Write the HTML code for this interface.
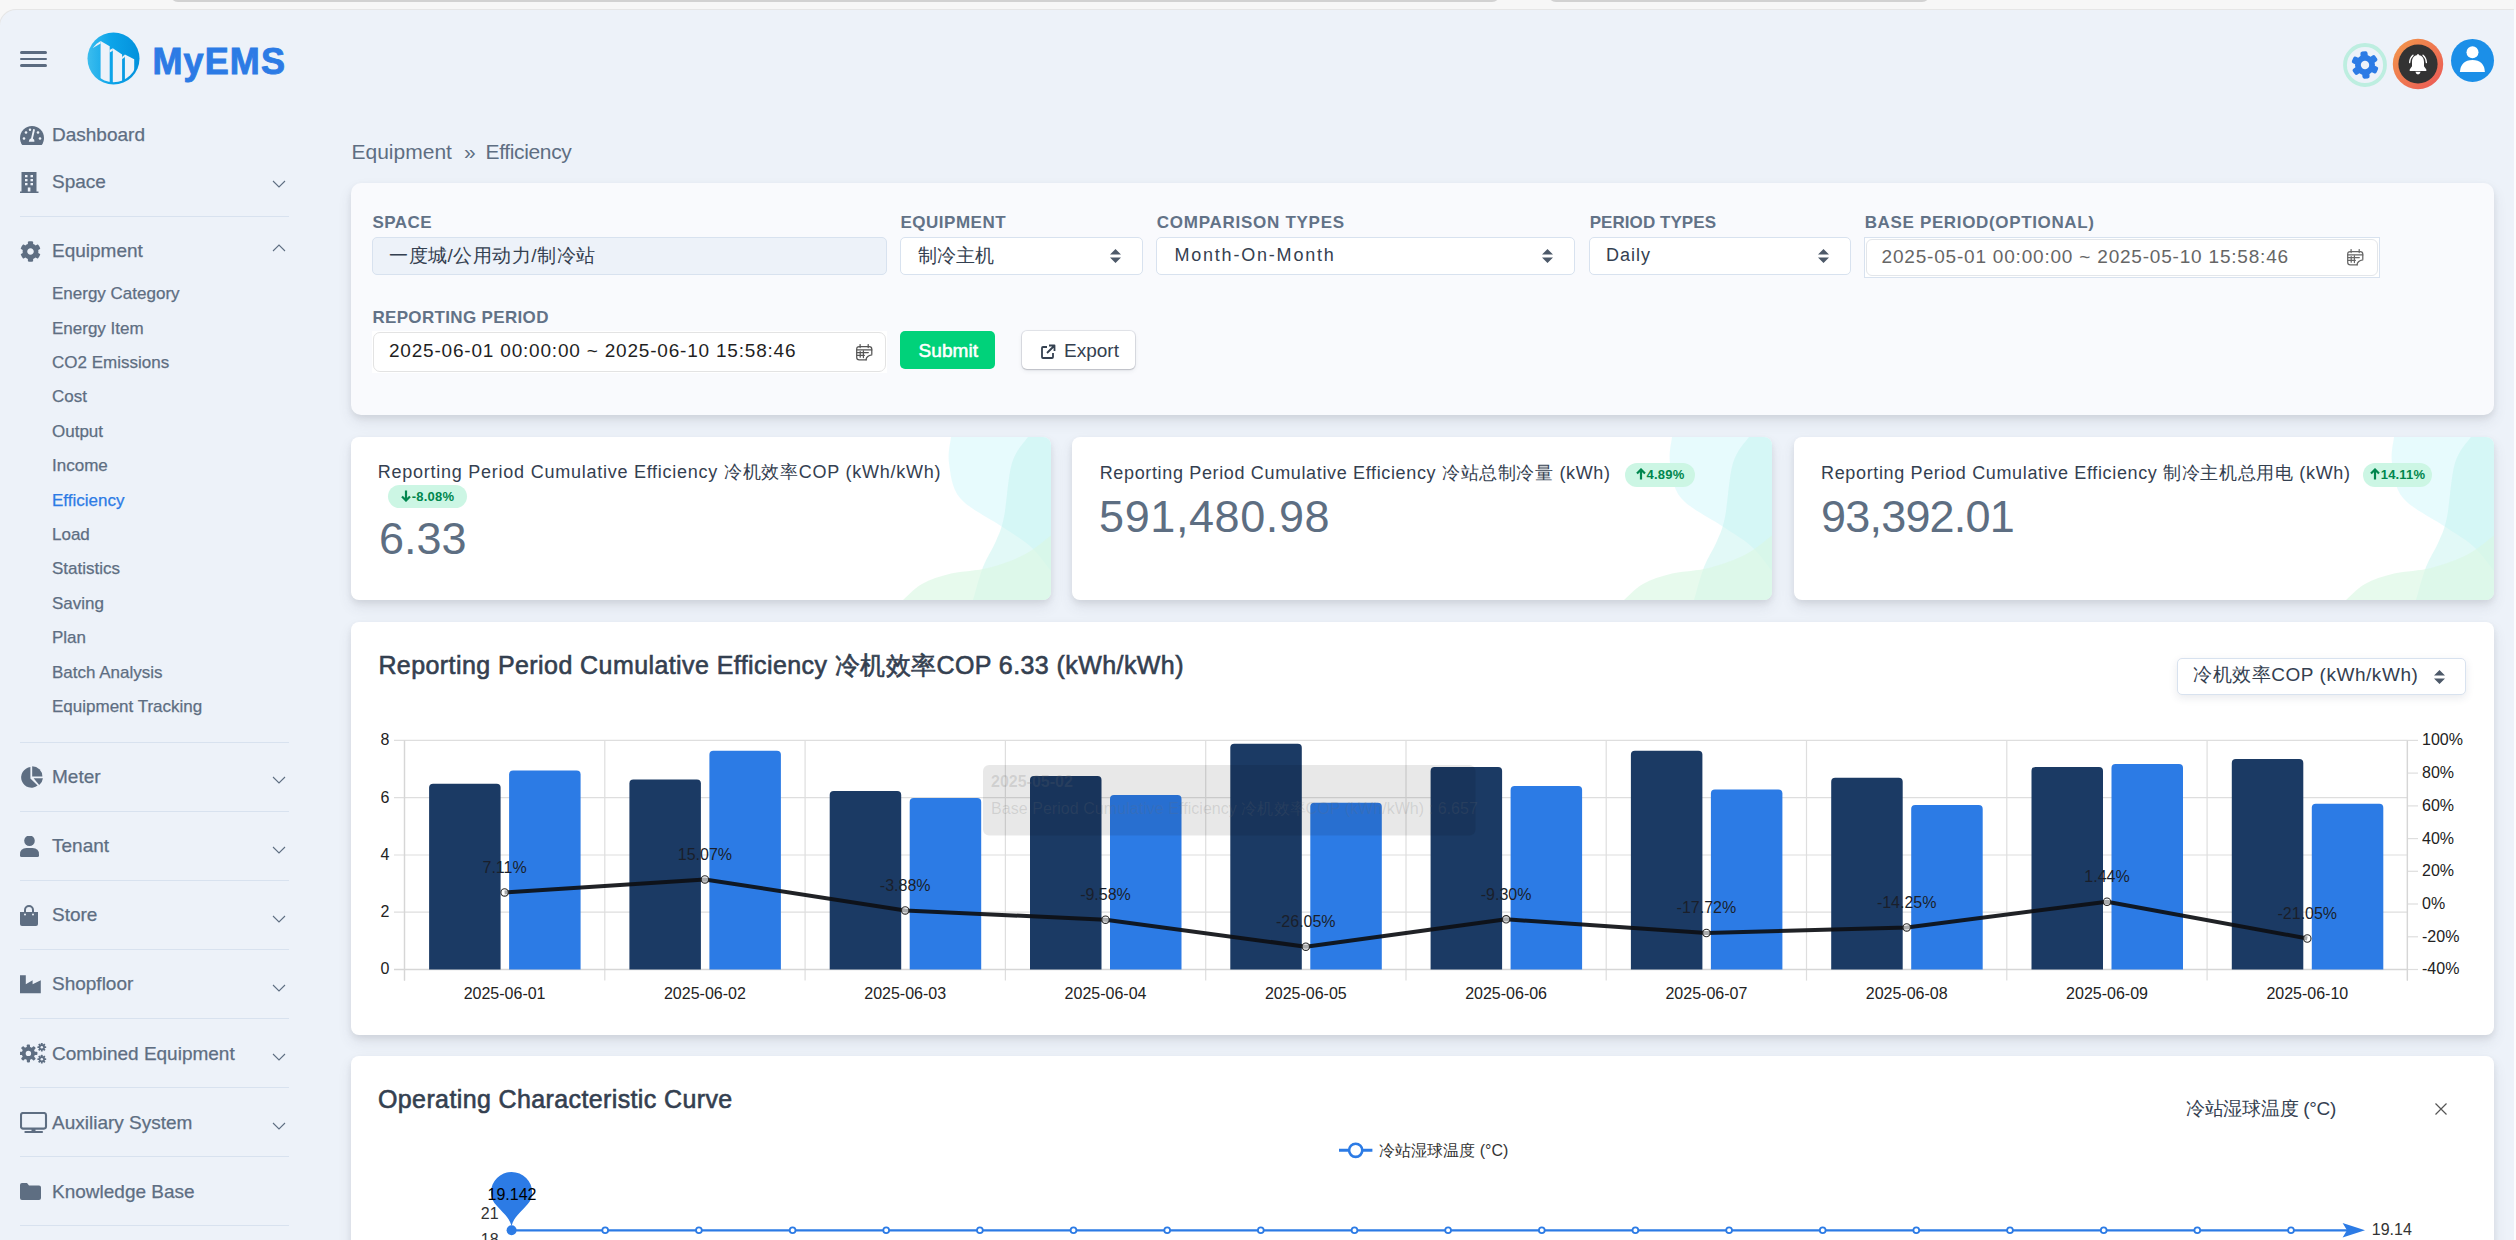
<!DOCTYPE html>
<html><head><meta charset="utf-8">
<style>
*{box-sizing:border-box;margin:0;padding:0}
html,body{width:2516px;height:1240px;overflow:hidden;background:#f7f7f7;font-family:"Liberation Sans",sans-serif}
.abs{position:absolute}
.t{position:absolute;white-space:nowrap}
#topbar{position:absolute;left:0;top:0;width:2516px;height:10px;background:#f7f7f7}
.tab{position:absolute;top:-6px;height:8px;background:#d2d2d2;border-radius:0 0 14px 14px}
#page{position:absolute;left:-1px;top:9px;width:2515px;height:1240px;background:#edf2f9;border-top:1px solid #e6e6e6;border-left:1px solid #e6e6e6;border-top-left-radius:17px}
#rstrip{position:absolute;left:2514px;top:10px;width:2px;height:1230px;background:#fbfcfd}
.nav{position:absolute;left:52px;color:#5e6e82;font-size:19px;line-height:24px;white-space:nowrap;-webkit-text-stroke:.25px #5e6e82}
.sub{position:absolute;left:52px;color:#5e6e82;font-size:17px;line-height:22px;white-space:nowrap;-webkit-text-stroke:.25px currentColor}
.div{position:absolute;left:20px;width:269px;height:1px;background:#d8e2ef}
.ico{position:absolute;left:20px}
.chev{position:absolute;left:272px;width:14px;height:8px}
.card{position:absolute;background:#fff;border-radius:8px;box-shadow:0 7px 14px 0 rgba(65,69,88,.1),0 3px 6px 0 rgba(0,0,0,.07)}
</style></head><body>
<div id="topbar">
  <div class="tab" style="left:170px;width:1330px"></div>
  <div class="tab" style="left:1548px;width:382px"></div>
</div>
<div id="page"></div>
<div id="rstrip"></div>
<div id="sidebar">
<!-- hamburger -->
<div class="abs" style="left:20px;top:51px;width:27px;height:3px;border-radius:2px;background:#5b6b80"></div>
<div class="abs" style="left:20px;top:58px;width:27px;height:2px;border-radius:1px;background:#5b6b80"></div>
<div class="abs" style="left:20px;top:64px;width:27px;height:3px;border-radius:2px;background:#5b6b80"></div>
<!-- logo -->
<svg class="abs" style="left:87px;top:32px" width="53" height="54" viewBox="0 0 53 54">
 <defs><linearGradient id="lg" x1="0" y1="0" x2="1" y2="0"><stop offset="0" stop-color="#3cbdee"/><stop offset=".45" stop-color="#0ca4e9"/><stop offset="1" stop-color="#0391dc"/></linearGradient>
 <clipPath id="lc"><circle cx="26.5" cy="26.6" r="23.6"/></clipPath></defs>
 <circle cx="26.5" cy="26.6" r="26" fill="url(#lg)"/>
 <g fill="#edf2f9" clip-path="url(#lc)">
  <path d="M5.5 16.2 Q9 11.6 13.6 9.1 L13.6 11.6 L6.3 15.8Z"/>
  <path d="M13.6 9.1 L22.7 14.2 L22.7 56 L13.6 56Z"/>
  <path d="M22.7 17.9 L25.8 16.2 L25.8 18.8 L22.7 20.4Z"/>
  <path d="M25.8 16.2 L35.1 22.4 L35.1 56 L25.8 56Z"/>
  <path d="M35.1 25.1 L37.9 22.4 L37.9 25 L35.1 27.2Z"/>
  <path d="M37.9 22.4 L47.2 27.2 L47.2 56 L37.9 56Z"/>
 </g>
</svg>
<div class="abs" style="left:152.5px;top:43.5px;font-size:36px;font-weight:bold;color:#2c7be5;letter-spacing:1.1px;line-height:36px;-webkit-text-stroke:.9px #2c7be5">MyEMS</div>

<!-- Dashboard -->
<svg class="ico" style="top:126px" width="24" height="19" viewBox="0 0 24 19">
 <path d="M12 0C5.4 0 0 5.4 0 12c0 2.5.8 4.8 2 6.7.3.2.6.3.9.3h18.2c.3 0 .6-.1.9-.3 1.2-1.9 2-4.2 2-6.7C24 5.4 18.6 0 12 0z" fill="#5e6e82"/>
 <circle cx="10" cy="3.8" r="1.2" fill="#edf2f9"/><circle cx="6" cy="6.5" r="1.3" fill="#edf2f9"/><circle cx="18" cy="6.5" r="1.3" fill="#edf2f9"/>
 <circle cx="4" cy="12.5" r="1.3" fill="#edf2f9"/><circle cx="20" cy="12.5" r="1.3" fill="#edf2f9"/>
 <path d="M13.2 3 L15 3.5 L12.9 12.6 Q14.8 13.6 14.4 15.8 L8.8 15.8 Q8.9 13.1 11.1 12.3 Z" fill="#edf2f9"/>
</svg>
<div class="nav" style="top:123px">Dashboard</div>

<!-- Space -->
<svg class="ico" style="top:172px" width="19" height="21" viewBox="0 0 19 21">
 <path d="M1.5 0h15v19.5h2v1.5H0v-1.5h1.5z" fill="#5e6e82"/>
 <g fill="#edf2f9"><rect x="5" y="3" width="2.5" height="2.3"/><rect x="10.5" y="3" width="2.5" height="2.3"/><rect x="5" y="7" width="2.5" height="2.3"/><rect x="10.5" y="7" width="2.5" height="2.3"/><rect x="5" y="11" width="2.5" height="2.3"/><rect x="10.5" y="11" width="2.5" height="2.3"/><rect x="7.8" y="15.5" width="2.6" height="4"/></g>
</svg>
<div class="nav" style="top:170px">Space</div>
<svg class="chev" style="top:180px" viewBox="0 0 14 8"><path d="M1 1 L7 7 L13 1" fill="none" stroke="#5e6e82" stroke-width="1.1"/></svg>
<div class="div" style="top:216px"></div>

<!-- Equipment -->
<svg class="ico" style="top:241px" width="21" height="21" viewBox="0 0 512 512"><path fill="#5e6e82" d="M487.4 315.7l-42.6-24.6c4.3-23.2 4.3-47 0-70.2l42.6-24.6c4.9-2.8 7.1-8.6 5.5-14-11.1-35.6-30-67.8-54.7-94.6-3.8-4.1-10-5.1-14.8-2.3L380.8 110c-17.9-15.4-38.5-27.3-60.8-35.1V25.8c0-5.6-3.9-10.5-9.4-11.7-36.7-8.2-74.3-7.8-109.2 0-5.5 1.2-9.4 6.1-9.4 11.7V75c-22.2 7.9-42.8 19.8-60.8 35.1L88.7 85.5c-4.9-2.8-11-1.9-14.8 2.3-24.7 26.7-43.6 58.9-54.7 94.6-1.7 5.4.6 11.2 5.5 14L67.3 221c-4.3 23.2-4.3 47 0 70.2l-42.6 24.6c-4.9 2.8-7.1 8.6-5.5 14 11.1 35.6 30 67.8 54.7 94.6 3.8 4.1 10 5.1 14.8 2.3l42.6-24.6c17.9 15.4 38.5 27.3 60.8 35.1v49.2c0 5.6 3.9 10.5 9.4 11.7 36.7 8.2 74.3 7.8 109.2 0 5.5-1.2 9.4-6.1 9.4-11.7v-49.2c22.2-7.9 42.8-19.8 60.8-35.1l42.6 24.6c4.9 2.8 11 1.9 14.8-2.3 24.7-26.7 43.6-58.9 54.7-94.6 1.5-5.5-.7-11.3-5.6-14.1zM256 336c-44.1 0-80-35.9-80-80s35.9-80 80-80 80 35.9 80 80-35.9 80-80 80z"/></svg>
<div class="nav" style="top:239px">Equipment</div>
<svg class="chev" style="top:244px" viewBox="0 0 14 8"><path d="M1 7 L7 1 L13 7" fill="none" stroke="#5e6e82" stroke-width="1.1"/></svg>
<div class="sub" style="top:283px">Energy Category</div>
<div class="sub" style="top:318px">Energy Item</div>
<div class="sub" style="top:352px">CO2 Emissions</div>
<div class="sub" style="top:386px">Cost</div>
<div class="sub" style="top:421px">Output</div>
<div class="sub" style="top:455px">Income</div>
<div class="sub" style="top:490px;color:#2c7be5">Efficiency</div>
<div class="sub" style="top:524px">Load</div>
<div class="sub" style="top:558px">Statistics</div>
<div class="sub" style="top:593px">Saving</div>
<div class="sub" style="top:627px">Plan</div>
<div class="sub" style="top:662px">Batch Analysis</div>
<div class="sub" style="top:696px">Equipment Tracking</div>
<div class="div" style="top:742px"></div>
<svg class="ico" style="top:766px" width="24" height="22" viewBox="0 0 24 22"><g fill="#5e6e82"><path d="M10.4 1.1A10.3 10.3 0 1 0 17.6 19.6L10.4 12.4Z"/><path d="M12.2 0.2A10.2 10.2 0 0 1 22.4 10.4H12.2Z"/><path d="M13.6 12.2H22.9Q22.6 16 19.2 18.9Z"/></g></svg>
<div class="nav" style="top:765px">Meter</div>
<svg class="chev" style="top:776px" viewBox="0 0 14 8"><path d="M1 1 L7 7 L13 1" fill="none" stroke="#5e6e82" stroke-width="1.1"/></svg>
<div class="div" style="top:811px"></div>
<svg class="ico" style="top:836px" width="19" height="21" viewBox="0 0 19 21"><circle cx="9.5" cy="4.8" r="5.3" fill="#5e6e82"/><path d="M0 18.5Q0 12 6.5 12h6Q19 12 19 18.5V19.5Q19 21 17.5 21h-16Q0 21 0 19.5z" fill="#5e6e82"/></svg>
<div class="nav" style="top:834px">Tenant</div>
<svg class="chev" style="top:846px" viewBox="0 0 14 8"><path d="M1 1 L7 7 L13 1" fill="none" stroke="#5e6e82" stroke-width="1.1"/></svg>
<div class="div" style="top:880px"></div>
<svg class="ico" style="top:905px" width="18" height="21" viewBox="0 0 18 21"><path d="M5 7V5a4 4 0 0 1 8 0v2" fill="none" stroke="#5e6e82" stroke-width="2"/><path d="M0 7h18v12q0 2-2 2H2q-2 0-2-2z" fill="#5e6e82"/><circle cx="5" cy="9.5" r="1" fill="#edf2f9"/><circle cx="13" cy="9.5" r="1" fill="#edf2f9"/></svg>
<div class="nav" style="top:903px">Store</div>
<svg class="chev" style="top:915px" viewBox="0 0 14 8"><path d="M1 1 L7 7 L13 1" fill="none" stroke="#5e6e82" stroke-width="1.1"/></svg>
<div class="div" style="top:949px"></div>
<svg class="ico" style="top:975px" width="21" height="19" viewBox="0 0 21 19"><path d="M0 0.3H5.8V9.3L12.6 5.3V9.3L20.8 5.3V18.3H0Z" fill="#5e6e82"/></svg>
<div class="nav" style="top:972px">Shopfloor</div>
<svg class="chev" style="top:984px" viewBox="0 0 14 8"><path d="M1 1 L7 7 L13 1" fill="none" stroke="#5e6e82" stroke-width="1.1"/></svg>
<div class="div" style="top:1018px"></div>
<svg class="ico" style="top:1043px" width="27" height="22" viewBox="0 0 27 22"><g fill="#5e6e82"><circle cx="8.4" cy="10.4" r="6.6"/><rect x="6.800000000000001" y="1.4000000000000004" width="3.2" height="18.0" rx="0.80" transform="rotate(0.0 8.4 10.4)"/><rect x="6.800000000000001" y="1.4000000000000004" width="3.2" height="18.0" rx="0.80" transform="rotate(45.0 8.4 10.4)"/><rect x="6.800000000000001" y="1.4000000000000004" width="3.2" height="18.0" rx="0.80" transform="rotate(90.0 8.4 10.4)"/><rect x="6.800000000000001" y="1.4000000000000004" width="3.2" height="18.0" rx="0.80" transform="rotate(135.0 8.4 10.4)"/><circle cx="21.8" cy="4.2" r="3.0"/><rect x="20.900000000000002" y="-0.20000000000000018" width="1.8" height="8.8" rx="0.45" transform="rotate(0.0 21.8 4.2)"/><rect x="20.900000000000002" y="-0.20000000000000018" width="1.8" height="8.8" rx="0.45" transform="rotate(45.0 21.8 4.2)"/><rect x="20.900000000000002" y="-0.20000000000000018" width="1.8" height="8.8" rx="0.45" transform="rotate(90.0 21.8 4.2)"/><rect x="20.900000000000002" y="-0.20000000000000018" width="1.8" height="8.8" rx="0.45" transform="rotate(135.0 21.8 4.2)"/><circle cx="21.8" cy="16.2" r="3.0"/><rect x="20.900000000000002" y="11.799999999999999" width="1.8" height="8.8" rx="0.45" transform="rotate(0.0 21.8 16.2)"/><rect x="20.900000000000002" y="11.799999999999999" width="1.8" height="8.8" rx="0.45" transform="rotate(45.0 21.8 16.2)"/><rect x="20.900000000000002" y="11.799999999999999" width="1.8" height="8.8" rx="0.45" transform="rotate(90.0 21.8 16.2)"/><rect x="20.900000000000002" y="11.799999999999999" width="1.8" height="8.8" rx="0.45" transform="rotate(135.0 21.8 16.2)"/></g><g fill="#edf2f9"><circle cx="8.4" cy="10.4" r="2.7"/><circle cx="21.8" cy="4.2" r="1.25"/><circle cx="21.8" cy="16.2" r="1.25"/></g></svg>
<div class="nav" style="top:1042px">Combined Equipment</div>
<svg class="chev" style="top:1053px" viewBox="0 0 14 8"><path d="M1 1 L7 7 L13 1" fill="none" stroke="#5e6e82" stroke-width="1.1"/></svg>
<div class="div" style="top:1087px"></div>
<svg class="ico" style="top:1112px" width="28" height="22" viewBox="0 0 28 22"><rect x="1" y="1" width="25" height="15.6" rx="2" fill="none" stroke="#5e6e82" stroke-width="2.1"/><rect x="11.5" y="16" width="4" height="3" fill="#5e6e82"/><rect x="4.3" y="18.9" width="18.8" height="2.2" rx="1.1" fill="#5e6e82"/></svg>
<div class="nav" style="top:1111px">Auxiliary System</div>
<svg class="chev" style="top:1122px" viewBox="0 0 14 8"><path d="M1 1 L7 7 L13 1" fill="none" stroke="#5e6e82" stroke-width="1.1"/></svg>
<div class="div" style="top:1156px"></div>
<svg class="ico" style="top:1183px" width="21" height="17" viewBox="0 0 21 17"><path d="M0 2Q0 0 2 0h5l2 2.5h10Q21 2.5 21 4.5V15q0 2-2 2H2q-2 0-2-2z" fill="#5e6e82"/></svg>
<div class="nav" style="top:1180px">Knowledge Base</div>
<div class="div" style="top:1225px"></div>
</div>
<div id="main">
<svg class="abs" style="left:2336px;top:36px" width="160" height="60" viewBox="2336 36 160 60">
 <circle cx="2365" cy="65" r="20" fill="none" stroke="#bdeee0" stroke-width="3.8"/>
 <g transform="translate(2365 65) rotate(-5)">
  <g fill="#2c7be5">
   <circle r="10"/>
   <rect x="-3.6" y="-13.6" width="7.2" height="27.2" rx="2"/>
   <rect x="-3.6" y="-13.6" width="7.2" height="27.2" rx="2" transform="rotate(60)"/>
   <rect x="-3.6" y="-13.6" width="7.2" height="27.2" rx="2" transform="rotate(120)"/>
  </g>
  <circle r="4.2" fill="#edf2f9"/>
 </g>
 <defs><linearGradient id="og" x1="0" y1="0" x2="1" y2="1"><stop offset="0" stop-color="#f2994a"/><stop offset="1" stop-color="#eb5757"/></linearGradient></defs>
 <circle cx="2418" cy="64" r="25.2" fill="url(#og)"/>
 <circle cx="2418" cy="64" r="19.6" fill="#333"/>
 <path d="M2418 54.2c-.8 0-1.2.5-1.2 1.1-3.3.6-4.8 3.4-4.8 6.7v4.3l-2.3 3.2v1.6h16.6v-1.6l-2.3-3.2V62c0-3.3-1.5-6.1-4.8-6.7 0-.6-.4-1.1-1.2-1.1z" fill="#fff"/>
 <path d="M2415.4 71.8h5.2q-.6 2.6-2.6 2.6t-2.6-2.6z" fill="#fff"/>
 <path d="M2409.6 62.6q.2-4.6 3.4-7.4M2426.4 62.6q-.2-4.6-3.4-7.4" fill="none" stroke="#fff" stroke-width="1.3" stroke-linecap="round"/>
 <circle cx="2472.5" cy="60.4" r="21.5" fill="#1b8fe8"/>
 <circle cx="2472.5" cy="52.2" r="6" fill="#fff"/>
 <path d="M2459.9 72q1-11.9 12.6-11.9t12.4 11.9z" fill="#fff"/>
</svg>
<div class="t" style="left:351.5px;top:141.3px;font-size:21px;line-height:21px;color:#5e6e82;font-weight:400;letter-spacing:0px;">Equipment</div>
<div class="t" style="left:464px;top:141.3px;font-size:21px;line-height:21px;color:#5e6e82;font-weight:400;letter-spacing:0px;">»</div>
<div class="t" style="left:485.5px;top:141.3px;font-size:21px;line-height:21px;color:#5e6e82;font-weight:400;letter-spacing:-0.35px;">Efficiency</div>
<div class="card" style="left:351px;top:183px;width:2143px;height:232px;background:#f9fafd;border-radius:10px"></div>
<div class="t" style="left:372.5px;top:214.4px;font-size:17px;line-height:17px;color:#627287;font-weight:700;letter-spacing:0.45px;">SPACE</div>
<div class="t" style="left:900.5px;top:214.4px;font-size:17px;line-height:17px;color:#627287;font-weight:700;letter-spacing:0.5px;">EQUIPMENT</div>
<div class="t" style="left:1156.8px;top:214.4px;font-size:17px;line-height:17px;color:#627287;font-weight:700;letter-spacing:0.73px;">COMPARISON TYPES</div>
<div class="t" style="left:1589.7px;top:214.4px;font-size:17px;line-height:17px;color:#627287;font-weight:700;letter-spacing:0.06px;">PERIOD TYPES</div>
<div class="t" style="left:1864.7px;top:214.4px;font-size:17px;line-height:17px;color:#627287;font-weight:700;letter-spacing:0.65px;">BASE PERIOD(OPTIONAL)</div>
<div class="t" style="left:372.4px;top:308.8px;font-size:17px;line-height:17px;color:#627287;font-weight:700;letter-spacing:0.34px;">REPORTING PERIOD</div>
<div class="abs" style="left:372px;top:237px;width:515px;height:38px;background:#edf2f9;border:1px solid #d8e2ef;border-radius:5px;"></div>
<div class="t" style="left:389px;top:245.9px;font-size:19px;line-height:19px;color:#344050;font-weight:400;letter-spacing:0.5px;">一度城/公用动力/制冷站</div>
<div class="abs" style="left:900px;top:237px;width:243px;height:38px;background:#fff;border:1px solid #d8e2ef;border-radius:5px;"></div>
<div class="t" style="left:918px;top:245.9px;font-size:19px;line-height:19px;color:#344050;font-weight:400;letter-spacing:0px;">制冷主机</div>
<svg class="abs" style="left:1110px;top:249px" width="11" height="14" viewBox="0 0 11 14"><path d="M5.5 0L11 5.5H0z M0 8.5H11L5.5 14z" fill="#4d5969"/></svg>
<div class="abs" style="left:1156px;top:237px;width:419px;height:38px;background:#fff;border:1px solid #d8e2ef;border-radius:5px;"></div>
<div class="t" style="left:1174.4px;top:245.7px;font-size:18px;line-height:18px;color:#344050;font-weight:400;letter-spacing:1.8px;">Month-On-Month</div>
<svg class="abs" style="left:1542px;top:249px" width="11" height="14" viewBox="0 0 11 14"><path d="M5.5 0L11 5.5H0z M0 8.5H11L5.5 14z" fill="#4d5969"/></svg>
<div class="abs" style="left:1589px;top:237px;width:262px;height:38px;background:#fff;border:1px solid #d8e2ef;border-radius:5px;"></div>
<div class="t" style="left:1606px;top:245.7px;font-size:18px;line-height:18px;color:#344050;font-weight:400;letter-spacing:1.0px;">Daily</div>
<svg class="abs" style="left:1818px;top:249px" width="11" height="14" viewBox="0 0 11 14"><path d="M5.5 0L11 5.5H0z M0 8.5H11L5.5 14z" fill="#4d5969"/></svg>
<div class="abs" style="left:1864px;top:237px;width:516px;height:41px;background:#fff;border:1px solid #d8e2ef;border-radius:0px;"></div>
<div class="abs" style="left:1866px;top:239px;width:512px;height:37px;background:#fff;border:1px solid #e3e6ea;border-radius:6px;"></div>
<div class="t" style="left:1881.6px;top:246.9px;font-size:19px;line-height:19px;color:#666;font-weight:400;letter-spacing:0.8px;">2025-05-01 00:00:00 ~ 2025-05-10 15:58:46</div>
<svg class="abs" style="left:2347px;top:248.5px" width="17" height="17" viewBox="0 0 17 17"><g fill="none" stroke="#666" stroke-width="1.25" stroke-linecap="round"><path d="M15.8 10V5.2q0-2.6-2.6-2.6H3.3Q0.7 2.6 0.7 5.2V13.2q0 2.6 2.6 2.6H10.5"/><path d="M4.1 0.6v3M12.2 0.6v3M0.8 5.9H15.7M1.2 8.6H12.3M7.4 7.2V13.6M4.2 7.6V13.2M1.2 11.4H8.3"/><path d="M10 15.7Q10.6 11.5 15.8 10.8"/></g></svg>
<div class="abs" style="left:371.5px;top:331px;width:515.5px;height:41.5px;background:#fff;border:1px solid #fff;border-radius:0px;"></div>
<div class="abs" style="left:373px;top:332px;width:512.5px;height:39.5px;background:#fff;border:1px solid #e3e3e3;border-radius:7px;"></div>
<div class="t" style="left:389px;top:340.8px;font-size:19px;line-height:19px;color:#1f1f1f;font-weight:400;letter-spacing:0.8px;">2025-06-01 00:00:00 ~ 2025-06-10 15:58:46</div>
<svg class="abs" style="left:855.5px;top:343.5px" width="17" height="17" viewBox="0 0 17 17"><g fill="none" stroke="#555" stroke-width="1.25" stroke-linecap="round"><path d="M15.8 10V5.2q0-2.6-2.6-2.6H3.3Q0.7 2.6 0.7 5.2V13.2q0 2.6 2.6 2.6H10.5"/><path d="M4.1 0.6v3M12.2 0.6v3M0.8 5.9H15.7M1.2 8.6H12.3M7.4 7.2V13.6M4.2 7.6V13.2M1.2 11.4H8.3"/><path d="M10 15.7Q10.6 11.5 15.8 10.8"/></g></svg>
<div class="abs" style="left:900px;top:331px;width:95px;height:38px;background:#00d27a;border-radius:5px"></div>
<div class="t" style="left:918.5px;top:340.8px;font-size:19px;line-height:19px;color:#fff;font-weight:400;letter-spacing:0.1px;-webkit-text-stroke:.55px #fff;">Submit</div>
<div class="abs" style="left:1021.5px;top:330.5px;width:113.5px;height:38.5px;background:#fff;border-radius:5px;box-shadow:0 0 0 1px rgba(43,45,80,.1),0 2px 5px 0 rgba(43,45,80,.08),0 1px 1.5px 0 rgba(0,0,0,.07),0 1px 2px 0 rgba(0,0,0,.08)"></div>
<svg class="abs" style="left:1040px;top:344px" width="16" height="16" viewBox="0 0 16 16"><g fill="none" stroke="#344050" stroke-width="1.8" stroke-linejoin="round"><path d="M7 3H3Q2 3 2 4v9q0 1 1 1h9q1 0 1-1V9"/><path d="M9 1.5h5.5V7M14.5 1.5L7 9"/></g></svg>
<div class="t" style="left:1064px;top:340.9px;font-size:19px;line-height:19px;color:#344050;font-weight:400;letter-spacing:0px;">Export</div>
<div class="card" style="left:351px;top:437px;width:700px;height:163px;overflow:hidden"><svg style="position:absolute;left:0;top:0" width="700" height="163" viewBox="0 0 700 163"><path d="M600 0 C599.7 4.3 596.5 15.8 598 26 C599.5 36.2 600.3 50.5 609 61 C617.7 71.5 638.3 81.0 650 89 C661.7 97.0 670.7 101.5 679 109 C687.3 116.5 696.5 129.8 700 134 L700 0Z" fill="#dff9fc" fill-opacity=".75"/><path d="M677 0 C674.3 4.3 665.0 12.7 661 26 C657.0 39.3 655.7 67.0 653 80 C650.3 93.0 648.5 95.7 645 104 C641.5 112.3 635.8 120.2 632 130 C628.2 139.8 623.7 157.5 622 163 L700 163 L700 0Z" fill="#bff2ee" fill-opacity=".45"/><path d="M552 163 C555.2 160.3 563.0 151.4 571 147 C579.0 142.6 588.8 139.3 600 136.6 C611.2 133.9 625.8 133.9 638 130.7 C650.2 127.5 663.2 122.9 673.5 117.6 C683.8 112.2 695.6 101.8 700 98.6 L700 163Z" fill="#daf7e3" fill-opacity=".65"/></svg></div>
<div class="card" style="left:1072px;top:437px;width:700px;height:163px;overflow:hidden"><svg style="position:absolute;left:0;top:0" width="700" height="163" viewBox="0 0 700 163"><path d="M600 0 C599.7 4.3 596.5 15.8 598 26 C599.5 36.2 600.3 50.5 609 61 C617.7 71.5 638.3 81.0 650 89 C661.7 97.0 670.7 101.5 679 109 C687.3 116.5 696.5 129.8 700 134 L700 0Z" fill="#dff9fc" fill-opacity=".75"/><path d="M677 0 C674.3 4.3 665.0 12.7 661 26 C657.0 39.3 655.7 67.0 653 80 C650.3 93.0 648.5 95.7 645 104 C641.5 112.3 635.8 120.2 632 130 C628.2 139.8 623.7 157.5 622 163 L700 163 L700 0Z" fill="#bff2ee" fill-opacity=".45"/><path d="M552 163 C555.2 160.3 563.0 151.4 571 147 C579.0 142.6 588.8 139.3 600 136.6 C611.2 133.9 625.8 133.9 638 130.7 C650.2 127.5 663.2 122.9 673.5 117.6 C683.8 112.2 695.6 101.8 700 98.6 L700 163Z" fill="#daf7e3" fill-opacity=".65"/></svg></div>
<div class="card" style="left:1794px;top:437px;width:700px;height:163px;overflow:hidden"><svg style="position:absolute;left:0;top:0" width="700" height="163" viewBox="0 0 700 163"><path d="M600 0 C599.7 4.3 596.5 15.8 598 26 C599.5 36.2 600.3 50.5 609 61 C617.7 71.5 638.3 81.0 650 89 C661.7 97.0 670.7 101.5 679 109 C687.3 116.5 696.5 129.8 700 134 L700 0Z" fill="#dff9fc" fill-opacity=".75"/><path d="M677 0 C674.3 4.3 665.0 12.7 661 26 C657.0 39.3 655.7 67.0 653 80 C650.3 93.0 648.5 95.7 645 104 C641.5 112.3 635.8 120.2 632 130 C628.2 139.8 623.7 157.5 622 163 L700 163 L700 0Z" fill="#bff2ee" fill-opacity=".45"/><path d="M552 163 C555.2 160.3 563.0 151.4 571 147 C579.0 142.6 588.8 139.3 600 136.6 C611.2 133.9 625.8 133.9 638 130.7 C650.2 127.5 663.2 122.9 673.5 117.6 C683.8 112.2 695.6 101.8 700 98.6 L700 163Z" fill="#daf7e3" fill-opacity=".65"/></svg></div>
<div class="t" style="left:377.8px;top:462.8px;font-size:18px;line-height:18px;color:#344050;font-weight:400;letter-spacing:0.75px;">Reporting Period Cumulative Efficiency 冷机效率COP (kWh/kWh)</div>
<div class="t" style="left:1099.7px;top:463.8px;font-size:18px;line-height:18px;color:#344050;font-weight:400;letter-spacing:0.65px;">Reporting Period Cumulative Efficiency 冷站总制冷量 (kWh)</div>
<div class="t" style="left:1821px;top:463.8px;font-size:18px;line-height:18px;color:#344050;font-weight:400;letter-spacing:0.65px;">Reporting Period Cumulative Efficiency 制冷主机总用电 (kWh)</div>
<div class="abs" style="left:388px;top:485px;width:79px;height:23px;background:#ccf6e4;border-radius:12px;color:#00864e;font-size:13px;font-weight:700;line-height:23px;text-align:center;letter-spacing:.2px"><svg width="10" height="12" viewBox="0 0 10 12" style="vertical-align:-1px;margin-right:1px"><path d="M5 0.5V10.5M1 6.5L5 10.5L9 6.5" fill="none" stroke="#00864e" stroke-width="2.2"/></svg>-8.08%</div>
<div class="abs" style="left:1625px;top:463px;width:70px;height:24px;background:#ccf6e4;border-radius:12px;color:#00864e;font-size:13px;font-weight:700;line-height:24px;text-align:center;letter-spacing:.2px"><svg width="10" height="12" viewBox="0 0 10 12" style="vertical-align:-1px;margin-right:1px"><path d="M5 11.5V1.5M1 5.5L5 1.5L9 5.5" fill="none" stroke="#00864e" stroke-width="2.2"/></svg>4.89%</div>
<div class="abs" style="left:2363px;top:463px;width:69px;height:24px;background:#ccf6e4;border-radius:12px;color:#00864e;font-size:13px;font-weight:700;line-height:24px;text-align:center;letter-spacing:.2px"><svg width="10" height="12" viewBox="0 0 10 12" style="vertical-align:-1px;margin-right:1px"><path d="M5 11.5V1.5M1 5.5L5 1.5L9 5.5" fill="none" stroke="#00864e" stroke-width="2.2"/></svg>14.11%</div>
<div class="t" style="left:379px;top:515.7px;font-size:45px;line-height:45px;color:#5d6e82;font-weight:400;letter-spacing:0px;">6.33</div>
<div class="t" style="left:1099px;top:493.7px;font-size:45px;line-height:45px;color:#5d6e82;font-weight:400;letter-spacing:0.6px;">591,480.98</div>
<div class="t" style="left:1821px;top:493.7px;font-size:45px;line-height:45px;color:#5d6e82;font-weight:400;letter-spacing:-0.8px;">93,392.01</div>
<div class="card" style="left:351px;top:622px;width:2143px;height:413px"></div>
<div class="t" style="left:378.4px;top:652.7px;font-size:25px;line-height:25px;color:#344050;font-weight:400;letter-spacing:0.42px;-webkit-text-stroke:.6px #344050;">Reporting Period Cumulative Efficiency 冷机效率COP 6.33 (kWh/kWh)</div>
<div class="abs" style="left:2176.5px;top:658px;width:289.5px;height:37px;background:#fff;border:1px solid #d8e2ef;border-radius:5px;box-shadow:0 3px 8px rgba(43,45,80,.1)"></div>
<div class="t" style="left:2193px;top:664.9px;font-size:19px;line-height:19px;color:#344050;font-weight:400;letter-spacing:0.55px;">冷机效率COP (kWh/kWh)</div>
<svg class="abs" style="left:2434px;top:670px" width="11" height="14" viewBox="0 0 11 14"><path d="M5.5 0L11 5.5H0z M0 8.5H11L5.5 14z" fill="#4d5969"/></svg>
<svg class="abs" style="left:0;top:0" width="2516" height="1240" viewBox="0 0 2516 1240"><line x1="394" y1="969.5" x2="2407.4" y2="969.5" stroke="#dedede" stroke-width="1.2"/><text x="389.5" y="974.4" text-anchor="end" font-size="16" fill="#222">0</text><line x1="394" y1="912.2" x2="2407.4" y2="912.2" stroke="#dedede" stroke-width="1.2"/><text x="389.5" y="917.1" text-anchor="end" font-size="16" fill="#222">2</text><line x1="394" y1="855.0" x2="2407.4" y2="855.0" stroke="#dedede" stroke-width="1.2"/><text x="389.5" y="859.9" text-anchor="end" font-size="16" fill="#222">4</text><line x1="394" y1="797.7" x2="2407.4" y2="797.7" stroke="#dedede" stroke-width="1.2"/><text x="389.5" y="802.6" text-anchor="end" font-size="16" fill="#222">6</text><line x1="394" y1="740.4" x2="2407.4" y2="740.4" stroke="#dedede" stroke-width="1.2"/><text x="389.5" y="745.3" text-anchor="end" font-size="16" fill="#222">8</text><line x1="404.5" y1="740.4" x2="404.5" y2="980.6" stroke="#dedede" stroke-width="1.2"/><line x1="604.8" y1="740.4" x2="604.8" y2="980.6" stroke="#dedede" stroke-width="1.2"/><line x1="805.1" y1="740.4" x2="805.1" y2="980.6" stroke="#dedede" stroke-width="1.2"/><line x1="1005.4" y1="740.4" x2="1005.4" y2="980.6" stroke="#dedede" stroke-width="1.2"/><line x1="1205.7" y1="740.4" x2="1205.7" y2="980.6" stroke="#dedede" stroke-width="1.2"/><line x1="1406.0" y1="740.4" x2="1406.0" y2="980.6" stroke="#dedede" stroke-width="1.2"/><line x1="1606.2" y1="740.4" x2="1606.2" y2="980.6" stroke="#dedede" stroke-width="1.2"/><line x1="1806.5" y1="740.4" x2="1806.5" y2="980.6" stroke="#dedede" stroke-width="1.2"/><line x1="2006.8" y1="740.4" x2="2006.8" y2="980.6" stroke="#dedede" stroke-width="1.2"/><line x1="2207.1" y1="740.4" x2="2207.1" y2="980.6" stroke="#dedede" stroke-width="1.2"/><line x1="2407.4" y1="740.4" x2="2407.4" y2="980.6" stroke="#dedede" stroke-width="1.2"/><line x1="2407.4" y1="740.4" x2="2418" y2="740.4" stroke="#dedede" stroke-width="1.2"/><text x="2422" y="745.3" font-size="16" fill="#222">100%</text><line x1="2407.4" y1="773.1" x2="2418" y2="773.1" stroke="#dedede" stroke-width="1.2"/><text x="2422" y="778.0" font-size="16" fill="#222">80%</text><line x1="2407.4" y1="805.9" x2="2418" y2="805.9" stroke="#dedede" stroke-width="1.2"/><text x="2422" y="810.8" font-size="16" fill="#222">60%</text><line x1="2407.4" y1="838.6" x2="2418" y2="838.6" stroke="#dedede" stroke-width="1.2"/><text x="2422" y="843.5" font-size="16" fill="#222">40%</text><line x1="2407.4" y1="871.3" x2="2418" y2="871.3" stroke="#dedede" stroke-width="1.2"/><text x="2422" y="876.2" font-size="16" fill="#222">20%</text><line x1="2407.4" y1="904.0" x2="2418" y2="904.0" stroke="#dedede" stroke-width="1.2"/><text x="2422" y="908.9" font-size="16" fill="#222">0%</text><line x1="2407.4" y1="936.8" x2="2418" y2="936.8" stroke="#dedede" stroke-width="1.2"/><text x="2422" y="941.7" font-size="16" fill="#222">-20%</text><line x1="2407.4" y1="969.5" x2="2418" y2="969.5" stroke="#dedede" stroke-width="1.2"/><text x="2422" y="974.4" font-size="16" fill="#222">-40%</text><line x1="394" y1="969.5" x2="2407.4" y2="969.5" stroke="#d6d6d6" stroke-width="1.3"/><line x1="404.5" y1="740.4" x2="404.5" y2="980.6" stroke="#d6d6d6" stroke-width="1.3"/><line x1="2407.4" y1="740.4" x2="2407.4" y2="980.6" stroke="#d6d6d6" stroke-width="1.3"/><path d="M429.1 969.5 V787.7 Q429.1 783.7 433.1 783.7 H496.6 Q500.6 783.7 500.6 787.7 V969.5Z" fill="#1b3a64"/><path d="M509.1 969.5 V774.5 Q509.1 770.5 513.1 770.5 H576.6 Q580.6 770.5 580.6 774.5 V969.5Z" fill="#2c7be5"/><text x="504.6" y="999" text-anchor="middle" font-size="16" fill="#222">2025-06-01</text><path d="M629.4 969.5 V783.4 Q629.4 779.4 633.4 779.4 H696.9 Q700.9 779.4 700.9 783.4 V969.5Z" fill="#1b3a64"/><path d="M709.4 969.5 V754.7 Q709.4 750.7 713.4 750.7 H776.9 Q780.9 750.7 780.9 754.7 V969.5Z" fill="#2c7be5"/><text x="704.9" y="999" text-anchor="middle" font-size="16" fill="#222">2025-06-02</text><path d="M829.7 969.5 V795.0 Q829.7 791.0 833.7 791.0 H897.2 Q901.2 791.0 901.2 795.0 V969.5Z" fill="#1b3a64"/><path d="M909.7 969.5 V802.0 Q909.7 798.0 913.7 798.0 H977.2 Q981.2 798.0 981.2 802.0 V969.5Z" fill="#2c7be5"/><text x="905.2" y="999" text-anchor="middle" font-size="16" fill="#222">2025-06-03</text><path d="M1030.0 969.5 V780.0 Q1030.0 776.0 1034.0 776.0 H1097.5 Q1101.5 776.0 1101.5 780.0 V969.5Z" fill="#1b3a64"/><path d="M1110.0 969.5 V798.9 Q1110.0 794.9 1114.0 794.9 H1177.5 Q1181.5 794.9 1181.5 798.9 V969.5Z" fill="#2c7be5"/><text x="1105.5" y="999" text-anchor="middle" font-size="16" fill="#222">2025-06-04</text><path d="M1230.3 969.5 V747.8 Q1230.3 743.8 1234.3 743.8 H1297.8 Q1301.8 743.8 1301.8 747.8 V969.5Z" fill="#1b3a64"/><path d="M1310.3 969.5 V806.7 Q1310.3 802.7 1314.3 802.7 H1377.8 Q1381.8 802.7 1381.8 806.7 V969.5Z" fill="#2c7be5"/><text x="1305.8" y="999" text-anchor="middle" font-size="16" fill="#222">2025-06-05</text><path d="M1430.6 969.5 V771.0 Q1430.6 767.0 1434.6 767.0 H1498.1 Q1502.1 767.0 1502.1 771.0 V969.5Z" fill="#1b3a64"/><path d="M1510.6 969.5 V790.0 Q1510.6 786.0 1514.6 786.0 H1578.1 Q1582.1 786.0 1582.1 790.0 V969.5Z" fill="#2c7be5"/><text x="1506.1" y="999" text-anchor="middle" font-size="16" fill="#222">2025-06-06</text><path d="M1630.9 969.5 V754.7 Q1630.9 750.7 1634.9 750.7 H1698.4 Q1702.4 750.7 1702.4 754.7 V969.5Z" fill="#1b3a64"/><path d="M1710.9 969.5 V793.5 Q1710.9 789.5 1714.9 789.5 H1778.4 Q1782.4 789.5 1782.4 793.5 V969.5Z" fill="#2c7be5"/><text x="1706.4" y="999" text-anchor="middle" font-size="16" fill="#222">2025-06-07</text><path d="M1831.2 969.5 V781.7 Q1831.2 777.7 1835.2 777.7 H1898.7 Q1902.7 777.7 1902.7 781.7 V969.5Z" fill="#1b3a64"/><path d="M1911.2 969.5 V809.0 Q1911.2 805.0 1915.2 805.0 H1978.7 Q1982.7 805.0 1982.7 809.0 V969.5Z" fill="#2c7be5"/><text x="1906.7" y="999" text-anchor="middle" font-size="16" fill="#222">2025-06-08</text><path d="M2031.5 969.5 V770.9 Q2031.5 766.9 2035.5 766.9 H2099.0 Q2103.0 766.9 2103.0 770.9 V969.5Z" fill="#1b3a64"/><path d="M2111.5 969.5 V768.0 Q2111.5 764.0 2115.5 764.0 H2179.0 Q2183.0 764.0 2183.0 768.0 V969.5Z" fill="#2c7be5"/><text x="2107.0" y="999" text-anchor="middle" font-size="16" fill="#222">2025-06-09</text><path d="M2231.8 969.5 V762.9 Q2231.8 758.9 2235.8 758.9 H2299.3 Q2303.3 758.9 2303.3 762.9 V969.5Z" fill="#1b3a64"/><path d="M2311.8 969.5 V807.8 Q2311.8 803.8 2315.8 803.8 H2379.3 Q2383.3 803.8 2383.3 807.8 V969.5Z" fill="#2c7be5"/><text x="2307.3" y="999" text-anchor="middle" font-size="16" fill="#222">2025-06-10</text><polyline points="504.6,892.4 704.9,879.4 905.2,910.4 1105.5,919.7 1305.8,946.7 1506.1,919.3 1706.4,933.0 1906.7,927.4 2107.0,901.7 2307.3,938.5" fill="none" stroke="#0d0f14" stroke-opacity=".92" stroke-width="4" stroke-linejoin="round"/><circle cx="504.6" cy="892.4" r="3.7" fill="#fff" fill-opacity=".62" stroke="#2a2a2a" stroke-width="1.1"/><text x="504.6" y="872.6" text-anchor="middle" font-size="16" fill="#1a1f2b">7.11%</text><circle cx="704.9" cy="879.4" r="3.7" fill="#fff" fill-opacity=".62" stroke="#2a2a2a" stroke-width="1.1"/><text x="704.9" y="859.6" text-anchor="middle" font-size="16" fill="#1a1f2b">15.07%</text><circle cx="905.2" cy="910.4" r="3.7" fill="#fff" fill-opacity=".62" stroke="#2a2a2a" stroke-width="1.1"/><text x="905.2" y="890.6" text-anchor="middle" font-size="16" fill="#1a1f2b">-3.88%</text><circle cx="1105.5" cy="919.7" r="3.7" fill="#fff" fill-opacity=".62" stroke="#2a2a2a" stroke-width="1.1"/><text x="1105.5" y="899.9" text-anchor="middle" font-size="16" fill="#1a1f2b">-9.58%</text><circle cx="1305.8" cy="946.7" r="3.7" fill="#fff" fill-opacity=".62" stroke="#2a2a2a" stroke-width="1.1"/><text x="1305.8" y="926.9" text-anchor="middle" font-size="16" fill="#1a1f2b">-26.05%</text><circle cx="1506.1" cy="919.3" r="3.7" fill="#fff" fill-opacity=".62" stroke="#2a2a2a" stroke-width="1.1"/><text x="1506.1" y="899.5" text-anchor="middle" font-size="16" fill="#1a1f2b">-9.30%</text><circle cx="1706.4" cy="933.0" r="3.7" fill="#fff" fill-opacity=".62" stroke="#2a2a2a" stroke-width="1.1"/><text x="1706.4" y="913.2" text-anchor="middle" font-size="16" fill="#1a1f2b">-17.72%</text><circle cx="1906.7" cy="927.4" r="3.7" fill="#fff" fill-opacity=".62" stroke="#2a2a2a" stroke-width="1.1"/><text x="1906.7" y="907.6" text-anchor="middle" font-size="16" fill="#1a1f2b">-14.25%</text><circle cx="2107.0" cy="901.7" r="3.7" fill="#fff" fill-opacity=".62" stroke="#2a2a2a" stroke-width="1.1"/><text x="2107.0" y="881.9" text-anchor="middle" font-size="16" fill="#1a1f2b">1.44%</text><circle cx="2307.3" cy="938.5" r="3.7" fill="#fff" fill-opacity=".62" stroke="#2a2a2a" stroke-width="1.1"/><text x="2307.3" y="918.7" text-anchor="middle" font-size="16" fill="#1a1f2b">-21.05%</text><rect x="983" y="765" width="492.5" height="70.5" rx="6" fill="#000" fill-opacity=".09"/><text x="991" y="786.8" font-size="16" font-weight="700" fill="#6d6d6d" fill-opacity=".2">2025-05-02</text><text x="991" y="814" font-size="16" fill="#6d6d6d" fill-opacity=".19" letter-spacing=".05">Base Period Cumulative Efficiency 冷机效率COP (kWh/kWh) : 6.657</text></svg>
<div class="card" style="left:351px;top:1056px;width:2143px;height:220px"></div>
<div class="t" style="left:378px;top:1087.2px;font-size:25px;line-height:25px;color:#344050;font-weight:400;letter-spacing:0.38px;-webkit-text-stroke:.6px #344050;">Operating Characteristic Curve</div>
<div class="t" style="left:2186px;top:1098.9px;font-size:19px;line-height:19px;color:#344050;font-weight:400;letter-spacing:-0.3px;">冷站湿球温度 (°C)</div>
<svg class="abs" style="left:2435px;top:1103px" width="12" height="12" viewBox="0 0 12 12"><path d="M0.5 0.5L11.5 11.5M11.5 0.5L0.5 11.5" stroke="#555" stroke-width="1.2"/></svg>
<svg class="abs" style="left:0;top:0" width="2516" height="1240" viewBox="0 0 2516 1240"><line x1="1339" y1="1150.3" x2="1372.4" y2="1150.3" stroke="#2c7be5" stroke-width="3"/><circle cx="1355.7" cy="1150.3" r="6.6" fill="#fff" stroke="#2c7be5" stroke-width="2.6"/><text x="1379.3" y="1156" font-size="16" fill="#333">冷站湿球温度 (°C)</text><line x1="511.6" y1="1230.3" x2="2350" y2="1230.3" stroke="#2c7be5" stroke-width="2.3"/><path d="M2342.6 1223 L2365 1230.3 L2342.6 1237.4 L2347 1230.3Z" fill="#2c7be5"/><circle cx="605.2" cy="1230.3" r="2.9" fill="#fff" stroke="#2c7be5" stroke-width="1.8"/><circle cx="698.9" cy="1230.3" r="2.9" fill="#fff" stroke="#2c7be5" stroke-width="1.8"/><circle cx="792.6" cy="1230.3" r="2.9" fill="#fff" stroke="#2c7be5" stroke-width="1.8"/><circle cx="886.2" cy="1230.3" r="2.9" fill="#fff" stroke="#2c7be5" stroke-width="1.8"/><circle cx="979.9" cy="1230.3" r="2.9" fill="#fff" stroke="#2c7be5" stroke-width="1.8"/><circle cx="1073.5" cy="1230.3" r="2.9" fill="#fff" stroke="#2c7be5" stroke-width="1.8"/><circle cx="1167.2" cy="1230.3" r="2.9" fill="#fff" stroke="#2c7be5" stroke-width="1.8"/><circle cx="1260.8" cy="1230.3" r="2.9" fill="#fff" stroke="#2c7be5" stroke-width="1.8"/><circle cx="1354.5" cy="1230.3" r="2.9" fill="#fff" stroke="#2c7be5" stroke-width="1.8"/><circle cx="1448.1" cy="1230.3" r="2.9" fill="#fff" stroke="#2c7be5" stroke-width="1.8"/><circle cx="1541.8" cy="1230.3" r="2.9" fill="#fff" stroke="#2c7be5" stroke-width="1.8"/><circle cx="1635.4" cy="1230.3" r="2.9" fill="#fff" stroke="#2c7be5" stroke-width="1.8"/><circle cx="1729.1" cy="1230.3" r="2.9" fill="#fff" stroke="#2c7be5" stroke-width="1.8"/><circle cx="1822.7" cy="1230.3" r="2.9" fill="#fff" stroke="#2c7be5" stroke-width="1.8"/><circle cx="1916.3" cy="1230.3" r="2.9" fill="#fff" stroke="#2c7be5" stroke-width="1.8"/><circle cx="2010.0" cy="1230.3" r="2.9" fill="#fff" stroke="#2c7be5" stroke-width="1.8"/><circle cx="2103.7" cy="1230.3" r="2.9" fill="#fff" stroke="#2c7be5" stroke-width="1.8"/><circle cx="2197.3" cy="1230.3" r="2.9" fill="#fff" stroke="#2c7be5" stroke-width="1.8"/><circle cx="2291.0" cy="1230.3" r="2.9" fill="#fff" stroke="#2c7be5" stroke-width="1.8"/><circle cx="511.6" cy="1230.3" r="5" fill="#2c7be5"/><path d="M511.6 1226 C 509 1217, 503 1213, 497 1206 C 493 1202, 491 1198, 491 1192.5 A 20.6 20.6 0 1 1 532.2 1192.5 C 532.2 1198, 530 1202, 526 1206 C 520 1213, 514 1217, 511.6 1226Z" fill="#2c7be5"/><text x="512" y="1200.3" text-anchor="middle" font-size="16" fill="#000">19.142</text><text x="498.6" y="1218.6" text-anchor="end" font-size="16" fill="#333">21</text><text x="498.6" y="1245" text-anchor="end" font-size="16" fill="#333">18</text><text x="2371.8" y="1234.7" font-size="16" fill="#333">19.14</text></svg>
</div>
</body></html>
